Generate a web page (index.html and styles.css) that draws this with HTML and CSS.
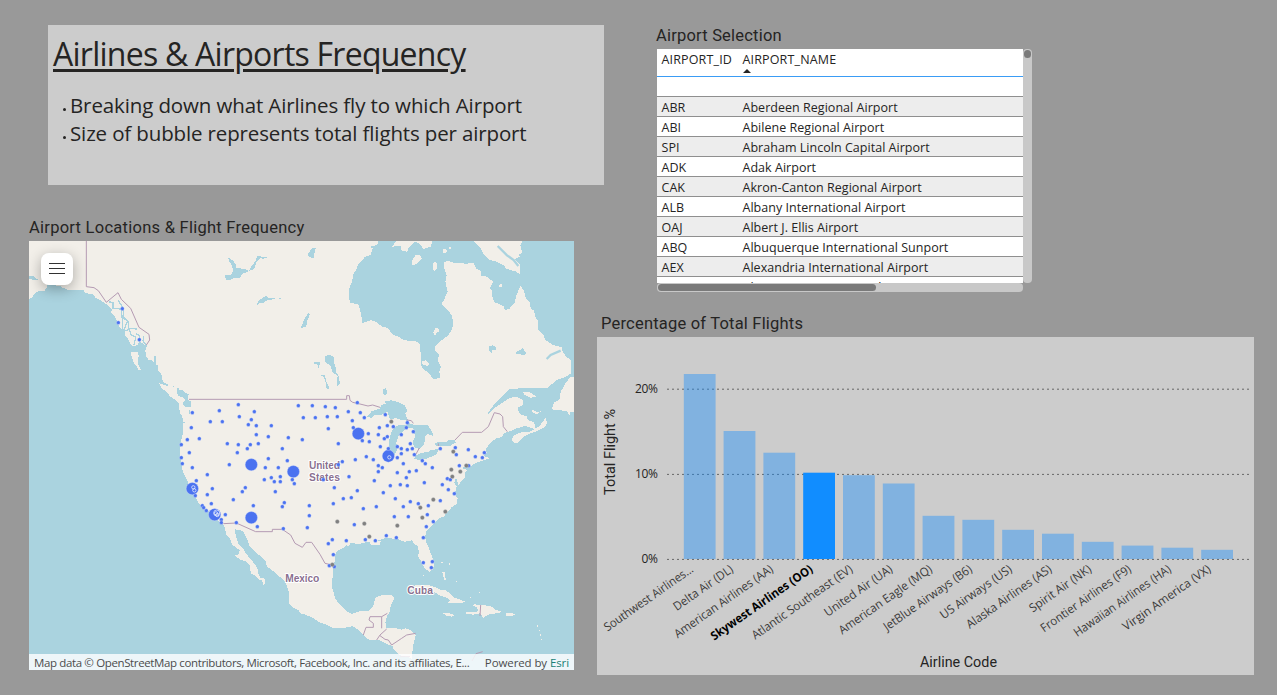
FILE: index.html
```html
<!DOCTYPE html>
<html lang="en">
<head>
<meta charset="utf-8">
<title>Airlines &amp; Airports Frequency</title>
<link rel="stylesheet" href="styles.css">
</head>
<body>
<main class="report">
  <section class="left">
    <div class="intro">
      <h1 class="intro-title">Airlines &amp; Airports Frequency</h1>
      <ul class="intro-list">
        <li><span class="line-a">Breaking down what Airlines fly to which Airport</span></li>
        <li><span class="line-b">Size of bubble represents total flights per airport</span></li>
      </ul>
    </div>
    <h2 class="visual-title map-title">Airport Locations &amp; Flight Frequency</h2>
    <div class="map">
      <svg class="map-svg" width="545" height="429" viewBox="0 3 1635 1287">
        <g class="water">
          <path d="M0 178L9 172 15 163 30 152 48 152 50 146 66 143 80 140 90 137 105 145 120 150 165 151 167 158 180 161 192 161 198 172 213 180 228 190 240 198 250 210 246 217 255 225 262 238 270 258 279 270 286 272 288 286 298 298 303 310 312 318 325 316 330 308 345 313 352 322 349 330 351 347 358 360 372 362 376 374 386 382 389 395 397 402 399 415 402 426 417 433 415 438 390 430 400 447 412 455 424 470 436 477 450 492 452 517 460 530 462 546 462 580 456 603 453 640 456 668 460 690 468 708 475 722 485 748 500 770 508 790 520 800 540 815 560 835 576 852 585 855 592 885 603 897 610 915 632 930 630 943 615 945 635 960 650 964 662 977 666 1000 680 1008 690 1020 700 1022 703 1037 710 1030 706 1015 694 1013 688 1000 685 983 668 960 650 940 640 922 628 912 620 885 618 868 636 871 645 877 655 900 662 920 675 930 685 943 692 945 712 967 713 979 733 994 752 1010 768 1025 775 1042 781 1060 779 1090 792 1103 808 1110 814 1120 826 1123 850 1133 871 1147 895 1155 912 1165 940 1165 970 1159 985 1167 1006 1189 1020 1199 1050 1200 1075 1213 1090 1218 1095 1230 1110 1245 1125 1249 1145 1254 1155 1270 1163 1290 0 1290z"/>
          <path transform="translate(813 645)" d="M98 345L100 333 104 320 106 297 112 288 130 278 138 271 146 272 152 264 178 267 197 262 210 262 213 270 240 271 242 259 234 257 252 250 270 248 280 252 290 248 300 256 315 260 335 256 345 268 354 275 357 292 354 305 363 318 367 330 378 343 388 350 400 342 402 322 394 300 388 282 380 265 375 248 379 228 395 212 418 188 430 187 440 173 455 157 470 147 473 130 464 117 470 95 463 82 468 68 476 92 482 80 496 65 495 52 501 45 482 38 507 36 531 22 547 17 568 11 562 5 550 4 560-5 558-18 570-35 588-50 605-54 612-66 627-70 650-80 676-87 698-80 703-77 690-70 670-70 657-66 640-58 636-45 645-34 656-38 668-53 690-64 710-71 733-83 742-95 737-112 728-100 720-88 706-80 702-99 684-104 681-115 664-121 656-130 654-142 670-150 668-165 652-174 630-172 605-155 582-140 570-128 562-118 566-129 587-158 608-176 630-199 680-200 740-200 772-226 798-235 813-245 813-284 798-295 786-314 785-323 757-331 736-345 730-360 715-375 715-400 707-412 701-434 692-440 690-456 678-470 672-492 661-508 654-490 648-478 645-458 633-447 628-438 615-435 610-447 583-459 576-480 577-496 568-497 580-520 560-535 544-538 543-552 528-560 520-576 508-577 498-572 490-575 462-576 444-583 432-578 433-560 440-540 436-520 439-507 443-490 434-470 425-453 432-445 446-432 455-418 459-400 457-378 445-359 425-344 405-327 406-312 416-303 415-280 423-265 418-250 420-233 410-229 400-227 390-242 365-263 362-290 361-333 345-342 330-342 310-345 297-355 280-360 262-382 248-384 230-398 214-405 198-400 187-396 183-425 175-453 151-456 147-470 148-500 156-520 160-543 170-559 175-573 190-586 193-594 212-600 218-620 210-625 232-630 235-642 1000-642 V645H514L511 632 521 608 536 595 544 582 550 589 545 603 556 611 574 609 578 604 600 613 640 606 680 605 690 613 705 645 360 645 350 640 338 625 335 606 340 570 347 541 330 525 318 520 304 524 287 519 260 520 256 503 262 480 270 470 272 452 283 430 275 420 248 419 226 428 221 450 208 467 180 469 155 477 138 468 115 445 106 430 97 400z"/>
          <g transform="translate(813 0)">
            <path d="M200 530L215 514 240 505 245 494 258 492 254 484 275 481 300 488 315 497 322 511 316 520 324 542 305 540 288 535 270 537 262 515 241 526 225 525 215 534z"/>
            <path d="M74 350L82 346 92 346 102 352 101 367 107 382 107 399 116 404 114 410 107 402 98 399 92 377 76 367zM42 367h18v8l-5 5 5 25 15 1 4 20 10 18-3 4-8-5-1-15-6-18-12-5-2-26-5-6h-8zM110 412l6-5 4 25-8 6zM248 450l10-6 4 15-6 8-8-6zM25 40l10-15h12l-7 30-15-6zM3 263l10-25 12-20 5 4-8 20-4 20zM565 320l12-4 10 4v10h-10l-2 9-6-6zM648 337l20-12 10 12-3 8-25-3z"/>
          </g>
          <g transform="translate(933 450)">
            <path d="M148 190L148 150 153 130 162 113 180 104 200 105 205 99 225 105 263 104 273 120 281 138 264 132 256 138 254 155 250 166 237 177 222 171 218 158 225 140 220 115 205 114 190 122 176 137 169 157 171 178 164 195 155 197zM222 205L230 195 245 189 265 185 273 180 298 177 287 195 255 208 235 210zM284 162L294 155 320 155 325 150 343 149 348 157 330 168 290 168z"/>
          </g>
          <path d="M597 52L612 62 620 72 623 85 648 86 660 93 668 78 680 62 685 48 700 50 717 52 704 56 695 55 682 68 675 87 655 95 640 102 634 113 607 116 606 121 592 120 586 105 603 106 613 94 608 75 600 64zM682 193l10-13 20-13 4 6 24 0-4 4-22 4-12 9-10 0-7 6zM749 174h6v3h-6zM0 107h14l5 8 8 4-9 3-18-6zM50 150l5-14 12-5 13 3 3 10zM443 443l6 0 0 8 12-2 8 9 10 4-2 18 8 4 2 16-18 0-8-9 8-12-8-8-12-2-6-10z"/>
          <path class="fjord" d="M240 185l12 4v16l24 2 4 30 0 34M268 180l14 26 3 30 14 9 0 20 25 2M282 230l18 18M295 245l-12 30 18-8 4 16 15 9-5 24M320 280l12 8 0 20 12 6M343 287v18M378 347v30h8v16M340 300l14 20M482 510v12M462 547h6M433 438v4"/>
        </g>
        <g class="land">
          <path d="M306 337h20l3 8-2 25 7 17 6 5-12-3-5-12-6-4-9-22zM317 349h3v3h-3z"/>
          <g transform="translate(813 0)">
            <path d="M275 20L290 3H396L393 20 370 27 360 12 345 5 324 24 322 35 305 33 303 18zM334 66L346 46 360 46 366 57 352 70 338 76zM398 72l6-7 7 4 0 14-7 12-6-6zM400 276l5-10 9-4 3 12-8 4-3 7-5-2zM365 364l12-3 10 9-3 8-16-4zM428 30l8-5 6 8-7 8-7-3zM522 3H667L661 17 667 40 655 42 660 50 644 58 660 75 661 104 647 94 620 87 610 75 590 65 570 60 550 43 543 25zM597 135l8-3 2 8-8 3zM668 455l20 1 22 14-18 3-18-8zM755 508L763 487 779 478 782 455 798 428 812 410 1000 408V515H812L808 525 800 513zM696 508l16 8 12-2-14 8-14-6zM446 20h7v8h-7zM408 268h3v5h-3z"/>
          </g>
          <g transform="translate(813 645)">
            <path d="M322 403L345 391 362 389 385 390 410 398 421 405 435 405 450 414 459 426 496 440 485 445 442 443 450 436 440 428 418 421 410 414 380 402 350 401 333 405zM495 475l5-5 29 1 5-4-4-10-13-5 5-4 28 2 26 5 11 9 16 6-3 5-28 1-10 4-12 8-10-13-20 4zM428 474l16-1 20 7-8 5-16-3zM617 474l20 0 8 4-8 5-19-1zM427 351l8 0 0 12 4 13-5-1-4-12zM424 321h4v3h-4zM447 324h3v7h-3zM510 426h4v3h-4zM536 410h3v3h-3zM468 378h4v3h-4zM369 359h4v3h-4zM711 511h4v4h-4zM716 525h3v3h-3zM720 537h3v7h-3zM724 552h3v4h-3z"/>
          </g>
        </g>
        <path class="inlet" d="M1406 18l28 28 20 14 14 18M1553 357l12-12 30-13"/>
        <g class="border">
          <path d="M172 0V140L195 143 208 152 232 187 267 158 277 178 305 205 330 262 360 283 362 300 352 315M480 478H953V467h8l2 14 8 6 22 5 24 6 14-3 22 7"/>
          <path transform="translate(813 0)" d="M320 540l14 2 6 8M348 642l10-18M415 610v8M465 600L487 577H545L565 560 583 518 600 522 608 530 610 560 622 575"/>
          <path d="M583 851L622 849 680 875H730V868H760L785 885 798 910 820 922 831 907H848L873 943 888 970 901 973"/>
          <path transform="translate(813 645)" d="M262 475L245 485V520M245 485H210L207 495 220 505V517H198L190 540M260 522L240 540 230 555M240 542L255 553 265 555 275 570 305 550 320 540 347 535M300 605h30M350 640l8 6M542 450l-2 33M516 618l12-22 20-6"/>
        </g>
        <g class="place">
          <text x="840" y="686" textLength="93">United</text>
          <text x="840" y="722" textLength="93">States</text>
          <text x="769" y="1025" textLength="102">Mexico</text>
          <text x="1135" y="1061" textLength="77">Cuba</text>
        </g>
        <g class="place-face">
          <text x="840" y="686" textLength="93" aria-hidden="true"></text>
        </g>
        <g id="airports"></g>
      </svg>
      <button class="menu" aria-label="Menu">
        <svg width="16" height="12" viewBox="0 0 16 12"><path d="M0 .5H16M0 5.5H16M0 10.5H16" stroke="#323232" stroke-width="1.1"/></svg>
      </button>
      <div class="attribution">
        <span class="sources">Map data © OpenStreetMap contributors, Microsoft, Facebook, Inc. and its affiliates, E...</span>
        <span class="powered">Powered by <a class="esri">Esri</a></span>
      </div>
    </div>
  </section>

  <section class="right">
    <h2 class="visual-title table-title">Airport Selection</h2>
    <div class="table-visual">
      <div class="table-row">
        <div class="table">
          <div class="head"><span class="h-id">AIRPORT_ID</span><span class="h-name">AIRPORT_NAME<i class="sort"></i></span></div>
          <div class="row"><span></span><span></span></div>
          <div class="row"><span>ABR</span><span>Aberdeen Regional Airport</span></div>
          <div class="row"><span>ABI</span><span>Abilene Regional Airport</span></div>
          <div class="row"><span>SPI</span><span>Abraham Lincoln Capital Airport</span></div>
          <div class="row"><span>ADK</span><span>Adak Airport</span></div>
          <div class="row"><span>CAK</span><span>Akron-Canton Regional Airport</span></div>
          <div class="row"><span>ALB</span><span>Albany International Airport</span></div>
          <div class="row"><span>OAJ</span><span>Albert J. Ellis Airport</span></div>
          <div class="row"><span>ABQ</span><span>Albuquerque International Sunport</span></div>
          <div class="row"><span>AEX</span><span>Alexandria International Airport</span></div>
          <div class="row"><span></span><span>Alpena County Regional Airport</span></div>
        </div>
        <div class="vbar"><div class="vthumb"></div></div>
      </div>
      <div class="hbar"><div class="hthumb"></div></div>
    </div>

    <h2 class="visual-title chart-title">Percentage of Total Flights</h2>
    <div class="chart">
      <svg id="chart" width="657" height="338" viewBox="597 337 657 338">
        <g class="grid"><path d="M667 389.2H1250M667 474.4H1250M667 559.4H1250"/></g>
        <g class="tick">
          <text x="658" y="393" textLength="23">20%</text>
          <text x="658" y="478" textLength="23">10%</text>
          <text x="658" y="563" textLength="16.5">0%</text>
        </g>
        <g id="bars"></g>
        <text class="axis" transform="translate(615 495) rotate(-90)" textLength="86" lengthAdjust="spacingAndGlyphs">Total Flight %</text>
        <text class="axis" x="920" y="667" textLength="77" lengthAdjust="spacingAndGlyphs">Airline Code</text>
      </svg>
    </div>
  </section>
</main>
<script src="charts.js"></script>
</body>
</html>
```
FILE: styles.css
```css
* { box-sizing: border-box; }
body { margin: 0; background: #999; color: #252423; font-family: "Open Sans", "Noto Sans", sans-serif; }
.report { width: 1277px; height: 695px; padding-left: 29px; display: flex; overflow: hidden; }
.left { width: 568px; flex: none; padding-top: 25px; }
.right { width: 657px; flex: none; padding-top: 25px; }

.intro { width: 556px; height: 160px; margin-left: 19px; padding: 6px 5px; background: #ccc; }
.intro-title { margin: 0; font-size: 32px; line-height: 46px; font-weight: 400; letter-spacing: -0.75px; white-space: nowrap; text-decoration: underline; text-decoration-thickness: 3px; text-underline-offset: 3px; }
.intro-list { margin: 14px 0 0; padding: 0 0 0 17px; list-style: none; font-size: 20.5px; line-height: 28px; white-space: nowrap; }
.intro-list li { position: relative; }
.intro-list li::before { content: ""; position: absolute; left: -7px; top: 17px; width: 3px; height: 3px; border-radius: 50%; background: #252423; }
.line-a { letter-spacing: -0.12px; }
.line-b { letter-spacing: -0.14px; }

.visual-title { margin: 0; font-family: Roboto, sans-serif; font-size: 16.5px; line-height: 22px; font-weight: 400; white-space: nowrap; letter-spacing: 0.2px; }
.map-title { margin-top: 32px; height: 24px; letter-spacing: 0.26px; }
.map { position: relative; width: 545px; height: 429px; overflow: hidden; background: #f2efe9; }
.map-svg { display: block; }
.water path { fill: #aad3df; shape-rendering: crispEdges; }
.water .fjord { fill: none; stroke: #aad3df; stroke-width: 4; }
.land path { fill: #f2efe9; shape-rendering: crispEdges; }
.inlet { fill: none; stroke: #aad3df; stroke-width: 7; }
.border path { fill: none; stroke: #b59bb3; stroke-width: 3; }
.place text { font: 700 31px "Liberation Sans", sans-serif; fill: #8a7090; stroke: #fff; stroke-width: 6; paint-order: stroke; stroke-linejoin: round; }
.dot { fill: #4b72f0; stroke: #d9e2fb; stroke-width: 1; }
.idle { fill: #808080; stroke: #ddd; stroke-width: 1; }
.ring { fill: none; stroke: #fff; stroke-width: 2; }
.menu { position: absolute; left: 12px; top: 12px; width: 32px; height: 32px; padding: 0 0 1px; border: 0; border-radius: 8px; background: #fff; box-shadow: 0 4px 14px rgba(0,0,0,.3); display: flex; align-items: center; justify-content: center; }
.attribution { position: absolute; left: 0; right: 0; bottom: 0; height: 16px; padding: 0 5px; display: flex; justify-content: space-between; background: rgba(255,255,255,.8); font-size: 11.5px; line-height: 17px; color: #4c4c4c; white-space: nowrap; }
.sources { letter-spacing: -0.37px; }
.powered { letter-spacing: -0.1px; }
.esri { color: #1a8276; }

.table-title { margin-left: 59px; height: 24px; }
.table-visual { width: 375px; margin-left: 60px; }
.table-row { display: flex; height: 234px; }
.table { width: 366px; height: 234px; overflow: hidden; background: #fff; font-size: 12.5px; }
.head, .row { display: grid; grid-template-columns: 81px 1fr; padding-left: 4.5px; white-space: nowrap; }
.head { height: 28px; line-height: 21px; border-bottom: 1px solid #3a9cf5; letter-spacing: 0.15px; }
.row { height: 20px; line-height: 21px; border-bottom: 1px solid #8f8f8f; }
.row:nth-child(odd) { background: #ededed; }
.row span { letter-spacing: 0.03px; }
.h-name { position: relative; }
.sort { position: absolute; left: 0; top: 20px; border: 4px solid transparent; border-top: 0; border-bottom-color: #252423; }
.vbar { width: 9px; background: #c8c8c8; border-radius: 4px; padding: 1px; }
.vthumb { width: 7px; height: 8px; border-radius: 4px; background: #7a7a7a; }
.hbar { width: 366px; height: 9px; padding: 1px; background: #c8c8c8; border-radius: 4px; }
.hthumb { width: 218px; height: 7px; border-radius: 4px; background: #7a7a7a; }

.chart-title { margin: 21px 0 0 4px; height: 24px; }
.chart { width: 657px; height: 338px; background: #ccc; }
.chart svg { display: block; }
.grid path { stroke: #666; stroke-width: 1; stroke-dasharray: 2 3; }
.tick text { font-size: 12px; fill: #252423; text-anchor: end; }
.bar { fill: #118dff; fill-opacity: .4; }
.bar.on { fill-opacity: 1; }
.label { font-size: 12px; fill: #3b3a39; text-anchor: end; }
.label.on { font-weight: 700; fill: #000; }
.axis { font-family: Roboto, sans-serif; font-size: 14px; fill: #252423; }
```
FILE: charts.js
```js
const NS = "http://www.w3.org/2000/svg";
function add(parent, tag, attrs, text) {
  const el = document.createElementNS(NS, tag);
  for (const k in attrs) el.setAttribute(k, attrs[k]);
  if (text) el.textContent = text;
  parent.appendChild(el);
}

const airports = document.getElementById("airports");
function plot(list, dx, dy, r, cls) {
  list.split(" ").forEach(p => {
    const [x, y] = p.split(",").map(Number);
    add(airports, "circle", { cx: x + dx, cy: y + dy, r, class: cls });
  });
}
// Hubs
plot("244,254 370,275 244,413 67,326 134,404", 423, 420, 18.5, "dot");
plot("55,131 145,198", 933, 450, 18.5, "dot");
// West
plot("67,98 148,92 205,74 253,95 208,110 244,119 121,125 157,125 235,134 259,137 304,137 64,143 259,164 295,170 52,179 88,176 355,173 397,179 34,194 172,191 205,194 241,194 265,191 232,206 202,218 58,218 337,206 34,233 37,251 67,263 178,254 295,236 352,242 286,263 325,263 283,299 304,293 331,290 313,305 331,305 367,299 373,311 112,284 79,302 127,326 112,344 76,347 226,323 217,335 316,335 190,359 124,371 97,377 101,383 109,392 250,377 343,368 337,380 166,404 154,419 154,428 199,428 262,440 340,446 385,77 427,77 466,80 496,83 400,113 436,113 472,110 502,110 475,146 505,191 517,245 505,254 460,299 493,323 520,356 490,371 418,377 418,407 412,443 535,95 537,290", 423, 420, 5.6, "dot");
// East
plot("52,38 61,68 73,83 37,92 136,74 40,113 118,113 142,107 160,110 202,98 199,113 85,131 115,134 133,146 142,140 184,134 220,125 67,152 88,155 211,161 121,170 145,176 172,170 184,176 184,191 202,179 217,176 172,203 223,194 79,200 100,209 46,209 190,221 247,212 256,221 277,233 115,227 127,233 115,245 172,248 208,245 229,242 199,263 103,272 151,287 181,284 202,287 253,278 52,302 130,308 34,323 166,326 70,356 109,350 190,350 211,335 235,341 265,347 301,332 163,380 205,380 262,374 43,404 280,395 259,410 139,437 169,443 250,443 76,449 106,452 19,452 250,518 277,515 274,533 301,176 346,173 349,194 385,179 433,188 406,200 427,203 358,227 386,227 322,266 331,269 307,284 325,299 343,311", 933, 450, 5.6, "dot");
// South Texas and Alaska
plot("97,254 85,266 100,299 88,332 103,335", 813, 645, 5.6, "dot");
plot("280,206 268,248 331,299", 0, 0, 5.6, "dot");
// Airports without matching flights
plot("154,95 340,185 334,239 361,245 379,227 337,260 280,329 241,353 247,383 316,365 73,401 172,407 88,440 -23,524 -8,395", 933, 450, 6.3, "idle");
// Overlapping airports inside hubs
plot("70,322 73,331 138,400 142,405", 423, 420, 5, "ring");
plot("148,202", 933, 450, 5, "ring");
plot("140,399", 423, 420, 9, "ring");

const bars = document.getElementById("bars");
[
  ["Southwest Airlines...", 374, 106], ["Delta Air (DL)", 431, 70],
  ["American Airlines (AA)", 452.7, 117.5], ["Skywest Airlines (OO)", 472.7, 121.5],
  ["Atlantic Southeast (EV)", 475.2, 120], ["United Air (UA)", 483.5, 80],
  ["American Eagle (MQ)", 515.8, 111], ["JetBlue Airways (B6)", 519.8, 105],
  ["US Airways (US)", 529.8, 84.5], ["Alaska Airlines (AS)", 533.7, 101],
  ["Spirit Air (NK)", 541.8, 72.7], ["Frontier Airlines (F9)", 545.6, 107.5],
  ["Hawaiian Airlines (HA)", 547.7, 115.5], ["Virgin America (VX)", 549.8, 104.5]
].forEach(([name, top, len], i) => {
  const x = 683.8 + i * 39.8;
  const on = i === 3 ? " on" : "";
  add(bars, "rect", { x, y: top, width: 31.8, height: 559 - top, class: "bar" + on });
  add(bars, "text", { transform: `translate(${x + 10.5} 571) rotate(-35)`, textLength: len, lengthAdjust: "spacingAndGlyphs", class: "label" + on }, name);
});
```
